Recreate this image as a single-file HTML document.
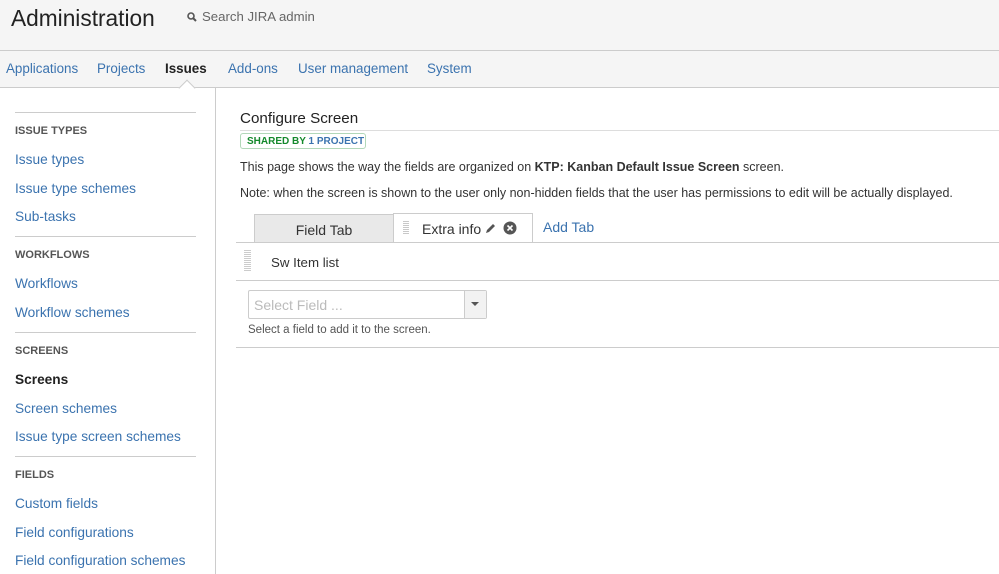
<!DOCTYPE html>
<html><head><meta charset="utf-8"><style>
*{margin:0;padding:0;box-sizing:border-box}
body{width:999px;height:574px;overflow:hidden;background:#fff;font-family:"Liberation Sans",Arial,sans-serif;color:#333;position:relative}
.a{position:absolute;white-space:nowrap}
.top{position:absolute;left:0;top:0;width:999px;height:88px;background:#f5f5f5;border-bottom:1px solid #ccc}
.l50{position:absolute;left:0;top:50px;width:999px;height:1px;background:#ccc}
.nav{font-size:13.4px;color:#3b73af;top:61px}
.side{position:absolute;left:215px;top:88px;width:1px;height:486px;background:#ccc}
.hr{position:absolute;left:15px;width:181px;height:1px;background:#ccc}
.h{font-size:11px;font-weight:bold;color:#555;left:15px}
.lk{font-size:13.7px;color:#3b73af;left:15px}
.line{position:absolute;left:236px;width:763px;height:1px;background:#ccc}
</style></head><body>
<div class="top"></div><div class="l50"></div>
<div class="a" style="left:11px;top:5px;font-size:22.7px;color:#222">Administration</div>
<svg class="a" style="left:187px;top:12px" width="10" height="10" viewBox="0 0 10 10"><circle cx="4" cy="4" r="3" fill="none" stroke="#555" stroke-width="1.6"/><path d="M6 6l3 3" stroke="#555" stroke-width="2"/></svg>
<div class="a" style="left:202px;top:9px;font-size:13.2px;color:#666">Search JIRA admin</div>
<div class="a nav" style="left:6px">Applications</div>
<div class="a nav" style="left:97px">Projects</div>
<div class="a nav" style="left:165px;color:#222;font-weight:bold">Issues</div>
<div class="a nav" style="left:228px">Add-ons</div>
<div class="a nav" style="left:298px">User management</div>
<div class="a nav" style="left:427px">System</div>
<div class="a" style="left:181px;top:82px;width:12px;height:12px;background:#fff;border-left:1px solid #ccc;border-top:1px solid #ccc;transform:rotate(45deg)"></div>
<div class="side"></div>
<div class="hr" style="top:112px"></div>
<div class="a h" style="top:125px">ISSUE TYPES</div>
<div class="a lk" style="top:152px">Issue types</div>
<div class="a lk" style="top:181px">Issue type schemes</div>
<div class="a lk" style="top:209px">Sub-tasks</div>
<div class="hr" style="top:236px"></div>
<div class="a h" style="top:249px">WORKFLOWS</div>
<div class="a lk" style="top:276px">Workflows</div>
<div class="a lk" style="top:305px">Workflow schemes</div>
<div class="hr" style="top:332px"></div>
<div class="a h" style="top:345px">SCREENS</div>
<div class="a lk" style="top:372px;color:#222;font-weight:bold">Screens</div>
<div class="a lk" style="top:401px">Screen schemes</div>
<div class="a lk" style="top:429px">Issue type screen schemes</div>
<div class="hr" style="top:456px"></div>
<div class="a h" style="top:469px">FIELDS</div>
<div class="a lk" style="top:496px">Custom fields</div>
<div class="a lk" style="top:525px">Field configurations</div>
<div class="a lk" style="top:553px">Field configuration schemes</div>

<div class="a" style="left:240px;top:110px;font-size:15.2px;color:#222">Configure Screen</div>
<div class="a" style="left:240px;top:130px;width:759px;height:1px;background:#ddd"></div>
<div class="a" style="left:240px;top:133px;width:126px;height:16px;border:1px solid #b2d8b9;border-radius:3px;font-size:10px;font-weight:bold;color:#14892c;padding:2px 0 0 6px">SHARED BY <span style="color:#3b73af">1 PROJECT</span></div>
<div class="a" style="left:240px;top:160px;font-size:12.5px">This page shows the way the fields are organized on <b>KTP: Kanban Default Issue Screen</b> screen.</div>
<div class="a" style="left:240px;top:186px;font-size:12.5px">Note: when the screen is shown to the user only non-hidden fields that the user has permissions to edit will be actually displayed.</div>
<div class="a" style="left:254px;top:214px;width:140px;height:29px;background:#e9e9e9;border:1px solid #ccc;font-size:14px;text-align:center;padding-top:7px">Field Tab</div>
<div class="a" style="left:393px;top:213px;width:140px;height:30px;background:#fff;border:1px solid #ccc;border-bottom:none"></div>
<div class="a" style="left:403px;top:221px;width:6px;height:14px;background:repeating-linear-gradient(#bbb 0 1px,transparent 1px 2px);opacity:.8"></div>
<div class="a" style="left:422px;top:221px;font-size:14px">Extra info</div>
<svg class="a" style="left:484px;top:222px" width="13" height="13" viewBox="0 0 13 13"><path d="M2 11l1-3 6-6 2 2-6 6z" fill="#555"/></svg>
<svg class="a" style="left:503px;top:221px" width="14" height="14" viewBox="0 0 14 14"><circle cx="7" cy="7" r="6.5" fill="#555"/><path d="M4.5 4.5l5 5M9.5 4.5l-5 5" stroke="#fff" stroke-width="1.6"/></svg>
<div class="a" style="left:543px;top:219px;font-size:14px;color:#3b73af">Add Tab</div>
<div class="line" style="top:242px"></div>
<div class="a" style="left:244px;top:250px;width:7px;height:22px;background:repeating-linear-gradient(#ccc 0 1px,transparent 1px 2px)"></div>
<div class="a" style="left:271px;top:255px;font-size:13.3px">Sw Item list</div>
<div class="line" style="top:280px"></div>
<div class="a" style="left:248px;top:290px;width:239px;height:29px;border:1px solid #ccc;border-radius:2px"></div>
<div class="a" style="left:464px;top:291px;width:22px;height:27px;background:#f2f2f2;border-left:1px solid #ccc"></div>
<div class="a" style="left:471px;top:302px;width:0;height:0;border-left:4px solid transparent;border-right:4px solid transparent;border-top:4px solid #555"></div>
<div class="a" style="left:254px;top:297px;font-size:14px;color:#bbb">Select Field ...</div>
<div class="a" style="left:248px;top:324px;font-size:11.5px;color:#555">Select a field to add it to the screen.</div>
<div class="line" style="top:347px"></div>
</body></html>
